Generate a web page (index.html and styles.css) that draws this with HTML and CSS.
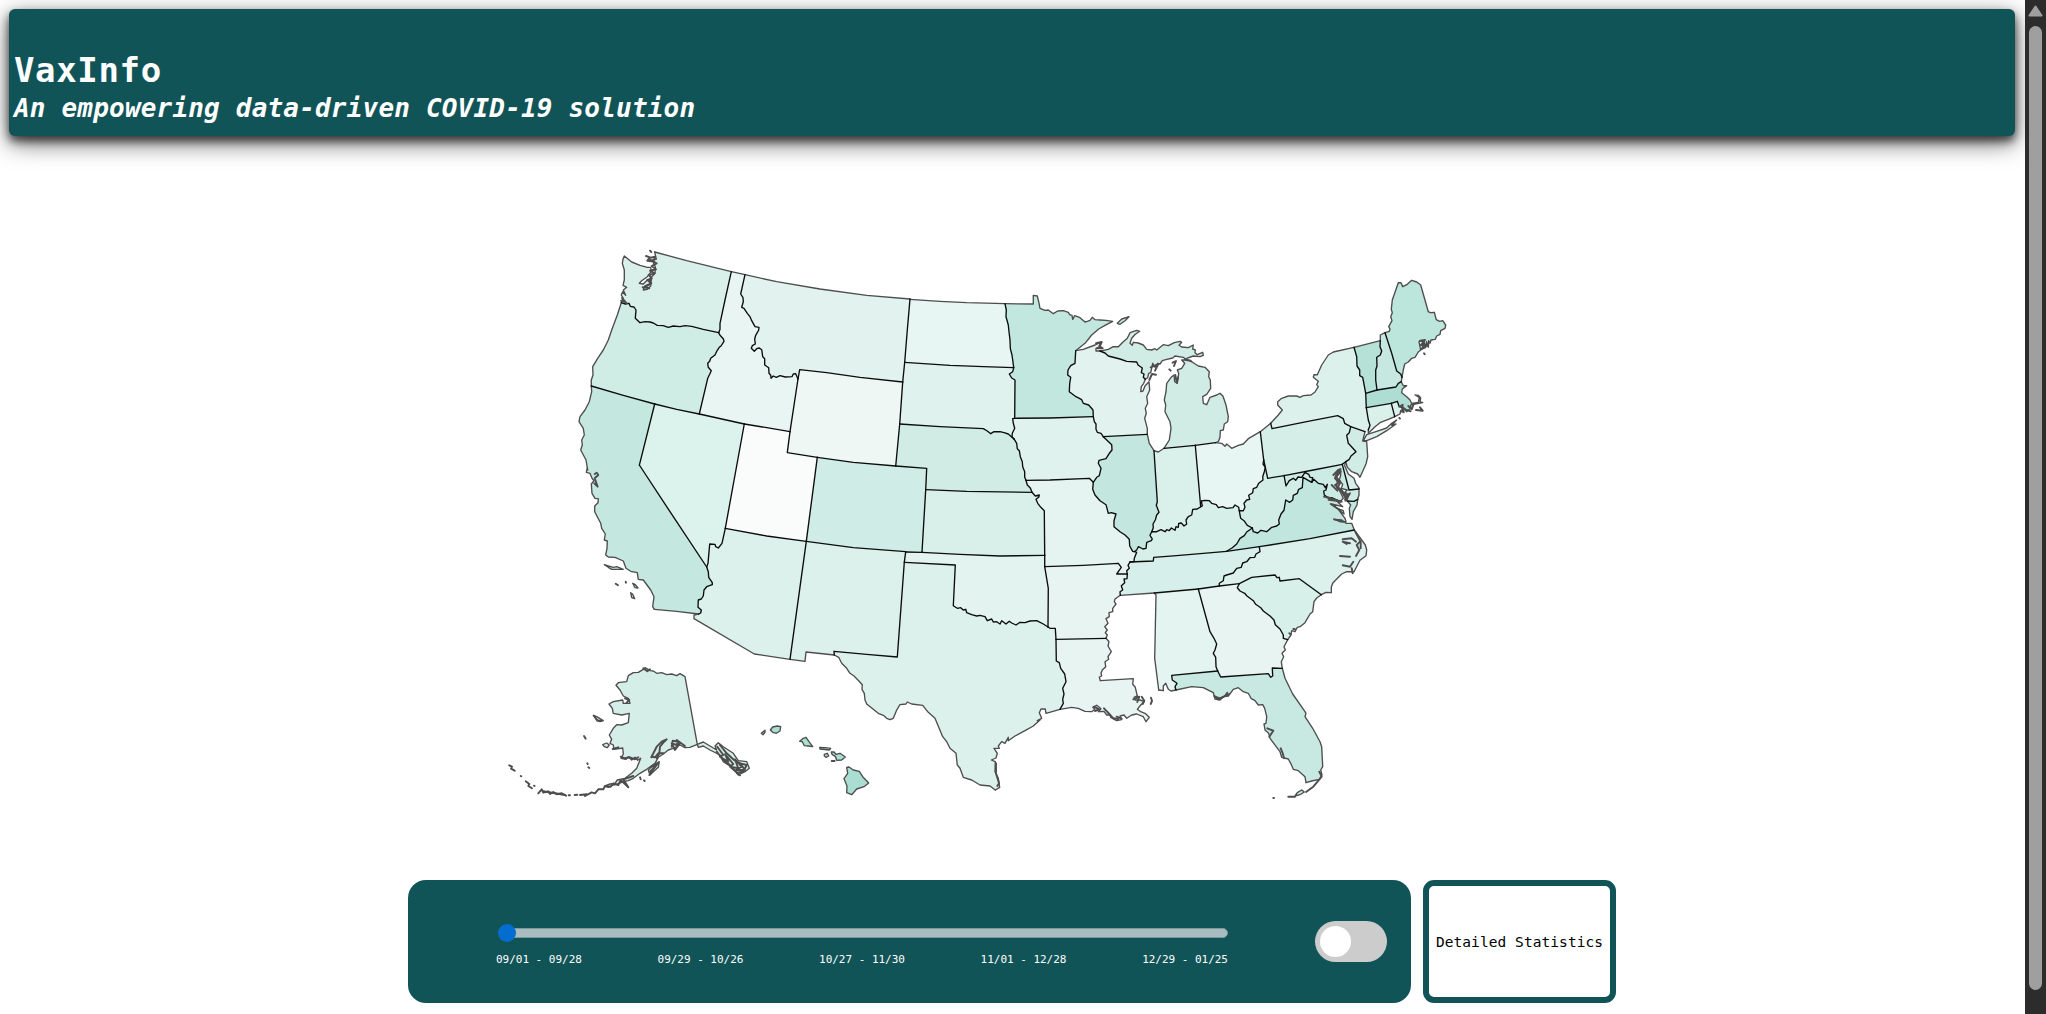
FILE: index.html
```html
<!DOCTYPE html>
<html lang="en">
<head>
<meta charset="utf-8">
<title>VaxInfo</title>
<link rel="stylesheet" href="styles.css">
</head>
<body>
<div class="page">
  <header class="banner">
    <h1 class="banner-title">VaxInfo</h1>
    <h2 class="banner-subtitle">An empowering data-driven COVID-19 solution</h2>
  </header>
  <main>
    <svg class="map" id="map" viewBox="475 230 1075 580" role="img" aria-label="Map of the United States"></svg>
    <section class="controls">
      <div class="panel">
        <div class="timeline">
          <div class="track"><span class="thumb"></span></div>
          <div class="dates">
            <span>09/01 - 09/28</span><span>09/29 - 10/26</span><span>10/27 - 11/30</span><span>11/01 - 12/28</span><span>12/29 - 01/25</span>
          </div>
        </div>
        <div class="toggle"><span class="knob"></span></div>
      </div>
      <button class="details">Detailed Statistics</button>
    </section>
  </main>
</div>
<div class="scrollbar">
  <svg class="scroll-arrow" viewBox="0 0 15 12"><path d="M7.500 1.500L13.500 10.500H1.500Z"/></svg>
  <div class="scroll-thumb"></div>
</div>
<script src="map.js"></script>
</body>
</html>
```
FILE: styles.css
```css
* { box-sizing: border-box; }
body {
  margin: 0;
  height: 1014px;
  overflow: hidden;
  display: flex;
  background: #fff;
  font-family: "DejaVu Sans Mono", monospace;
}
.page { flex: 1; padding: 9px 10px 0 9px; min-width: 0; overflow: hidden; }
.banner {
  height: 127px;
  padding: 39px 5px 0;
  border-radius: 6px;
  background: #115458;
  color: #fff;
  box-shadow: 0 5px 9px rgba(0, 0, 0, .6), 0 7px 23px rgba(0, 0, 0, .6);
}
.banner-title { margin: 0; font-size: 34px; line-height: 44px; letter-spacing: .65px; }
.banner-subtitle { margin: -2px 0 0; font-size: 26px; line-height: 36px; letter-spacing: .19px; font-style: italic; white-space: nowrap; }
.map { display: block; width: 1075px; height: 580px; margin: 94px auto 70px; }
.map path { stroke-linejoin: round; stroke-linecap: round; }
.border { fill: none; stroke: #0c0c0c; stroke-width: 1.35; }
.coast { fill: none; stroke: #4d4d4d; stroke-width: 1.35; }
.rough { fill: none; stroke: #4d4d4d; stroke-width: 1.9; }
.controls { display: flex; justify-content: center; gap: 12px; height: 123px; }
.panel {
  width: 1003px;
  display: flex;
  border-radius: 18px;
  background: #115458;
  padding: 41px 24px 0 87px;
}
.timeline { width: 734px; padding-top: 7px; }
.track {
  width: 729px;
  height: 10px;
  margin-left: 4px;
  border: 1px solid #7d989b;
  border-radius: 5px;
  background: #a9bdc1;
  display: flex;
  align-items: center;
}
.thumb { width: 18px; height: 18px; flex: none; margin-left: -2px; border-radius: 50%; background: #066dd0; }
.dates {
  display: flex;
  justify-content: space-between;
  width: 732px;
  margin: 14px 0 0 1px;
  color: #fff;
  font-size: 11px;
  line-height: 16px;
  letter-spacing: -.02px;
}
.toggle { width: 72px; height: 41px; margin-left: auto; padding: 5px; border-radius: 21px; background: #ccc; }
.knob { display: block; width: 31px; height: 31px; border-radius: 50%; background: #fff; }
.details {
  width: 193px;
  border: 6px solid #115458;
  border-radius: 11px;
  background: #fff;
  color: #000;
  font: 14.5px "DejaVu Sans Mono", monospace;
  letter-spacing: .07px;
  padding: 0;
  white-space: nowrap;
}
.scrollbar { width: 21px; background: #2c2c2c; display: flex; flex-direction: column; align-items: center; padding-top: 5px; }
.scroll-arrow { width: 15px; height: 12px; fill: #9f9f9f; stroke: #9f9f9f; stroke-width: 2; stroke-linejoin: round; }
.scroll-thumb { width: 13px; height: 964px; margin-top: 9px; border-radius: 7px; background: #9f9f9f; }
```
FILE: map.js
```js
// Each map sheet is digitised at three units per pixel from its own origin.
const sheets = { A: [560, 230], B: [560, 460], C: [900, 280], D: [900, 500], E: [1200, 270], F: [1110, 440], G: [1180, 560], H: [490, 650] };

// Borders between two states.
const borders = {
  wa_or: "A 184,218 196,222 207,220 211,229 222,231 228,240 226,265 240,278 255,275 270,276 280,279 292,286 310,287 325,292 340,288 360,290 375,287 395,289 430,298 476,308",
  wa_id: "A 514,125 495,210 480,280 480,298 476,308",
  or_id: "A 476,308 480,316 490,326 492,334 483,348 478,352 472,361 465,375 452,385 449,394 443,400 445,412 454,422 449,433 443,445 418,552",
  or_ca: "A 94,468 190,496 284,522", or_nv: "A 284,522 350,538 418,552",
  id_nv: "A 418,552 553,582", id_ut: "A 553,582 620,593 690,605",
  id_mt: "A 555,134 542,192 549,203 550,215 545,232 552,235 562,250 570,260 575,272 585,290 597,292 596,300 587,316 584,327 586,342 577,347 574,355 583,364 590,356 598,354 605,359 608,380 614,386 614,405 626,413 627,430 632,436 633,445 640,438 649,442 660,437 676,441 696,440 700,432 707,431 714,447",
  id_wy: "A 714,447 690,605", mt_wy: "A 714,447 719,419 800,428 900,442 1028,456",
  mt_nd: "A 1050,207 1042,300 1034,397", mt_sd: "A 1034,397 1028,456",
  wy_sd: "A 1028,456 1019,582", wy_ne: "A 1019,582 1007,708",
  wy_ut: "A 690,605 682,668 772,682", wy_co: "A 772,682 880,697 1007,708",
  ne_co: "A 1007,708|C 80,565 77,629", co_ks: "C 77,629|D 66,157",
  nd_sd: "C 14,247 150,256 250,260 341,263",
  sd_ne: "A 1019,582|C 120,440 250,446 262,453 272,461 282,455 300,455 312,458 325,462 335,471 343,478",
  nd_mn: "C 315,71 319,90 318,110 325,135 327,155 330,180 331,205 336,225 338,240 341,263",
  sd_mn: "C 341,263 338,275 328,282 335,294 345,300 344,415",
  mn_ia: "C 344,415 450,414 580,410",
  sd_ia: "C 344,415 338,416 340,430 344,445 337,460 336,470 343,478",
  ne_ia: "C 343,478 350,490 352,506 358,512 361,530 367,545 368,560 374,575 374,592 378,601",
  ne_mo: "C 378,601 382,615 391,624 396,637", ne_ks: "C 77,629 200,634 396,637",
  ks_mo: "C 396,637 406,648 418,645 416,652 408,658 413,670 421,680 433,692|D 434,166",
  ks_ok: "D 434,166 300,168 180,163 66,157", co_ok: "D 66,157 17,156",
  co_nm: "B 739,244 880,263 1037,275", ok_nm: "B 1037,275 1033,307",
  nm_tx: "B 1033,307 1012,591 920,583 822,574 823,585",
  ut_co: "A 772,682|B 739,244", ut_nv: "A 553,582|B 496,205",
  ut_az: "B 496,205 620,228 739,244",
  nv_az: "B 496,205 486,250 475,264 467,260 465,253 449,252 444,310 440,321",
  ca_nv: "A 284,522 238,706|B 240,18 340,170 440,321",
  ca_az: "B 440,321 445,335 446,352 457,368 457,374 440,380 432,390 430,408 424,417 415,420 414,442 424,450 422,459 416,462",
  az_nm: "B 739,244 690,598",
  ok_tx: "D 14,187 166,195 160,317 172,325 182,323 190,330 197,328 200,338 215,344 230,348 240,346 255,350 262,362 275,357 280,366 290,365 300,372 305,362 318,372 328,364 335,369 348,375 360,367 375,368 390,363 410,362 430,372 444,381",
  ok_ar: "D 434,200 445,265 444,381", ok_mo: "D 434,166 434,200",
  mo_ar: "D 434,200 550,196 655,190 664,202 657,212 650,222 682,222",
  ar_tx: "D 444,381 450,385 466,385 468,418", ar_la: "D 468,418 618,415",
  tx_la: "D 468,418 469,483 478,488 482,505 494,522 498,545 488,565 492,582 488,598 490,610 480,628",
  ar_tn: "D 682,222 681,236 672,237 674,248 664,257 668,270 660,275 661,286",
  mo_tn: "D 682,222 680,212 688,205 684,196 690,186",
  mo_ky: "D 690,186 702,185 703,175 710,157 705,155",
  mo_il: "C 580,607 578,628 585,645 600,662 618,674 625,700 634,698 648,702|D 642,62 642,80 660,95 675,105 688,118 689,138 698,154 705,155",
  ia_mo: "C 378,601 450,600 568,595 580,607",
  ia_il: "C 580,607 590,592 598,587 603,565 595,550 597,541 618,536 628,520 636,510 635,494 620,480 610,470",
  ia_wi: "C 580,410 583,425 588,432 588,448 592,457 603,460 610,470",
  mn_wi: "C 580,410 579,390 566,375 550,370 545,359 528,350 508,335 509,310 512,292 503,285 504,270 512,257 525,250 527,212",
  wi_il: "C 610,470 742,463",
  wi_mi: "C 600,213 615,219 625,228 660,237 680,244 710,246 714,255 727,264 724,278 732,282 730,292 736,298",
  in_mi: "C 792,505 886,496", mi_oh: "C 886,496 947,488",
  ny_pa: "E 212,460 216,476 320,455 413,437 430,446 434,460 452,470",
  ny_vt: "E 462,232 470,260 471,288 479,300 479,317 488,322 497,370",
  ny_ma: "E 497,370 499,413", ny_ct: "E 499,413 505,450 510,466 505,480",
  nh_vt: "E 541,212 540,230 545,243 541,255 530,262 531,288 527,300 527,330 531,360",
  vt_ma: "E 497,370 531,360", nh_ma: "E 531,360 588,351 595,340 604,335",
  nh_me: "E 555,188 575,250 590,303 602,312 606,322",
  ma_ri: "E 574,400 592,394 597,408 610,415", ma_ct: "E 499,413 574,400", ct_ri: "E 574,400 584,440",
  ny_nj: "E 452,470 495,485",
  pa_nj: "E 452,470 448,488 440,496 445,520 456,532 468,545 453,558 447,569 437,575",
  pa_de: "E 437,575 427,583", pa_md: "E 427,583 340,600 253,617",
  pa_wv: "E 253,617 203,625 191,570", pa_oh: "E 191,570 181,485",
  oh_wv: "F 461,60 459,72 466,82 463,95 458,110 459,120 446,130 440,142 430,146 428,158 416,166 419,178 410,180 402,190 405,202 400,212 388,212",
  oh_ky: "F 388,212 386,202 375,195 369,203 350,205 338,200 325,203 319,194 305,190 298,182 285,181 274,183 277,198 272,200",
  in_oh: "C 886,496|F 272,200",
  in_ky: "F 272,200 262,207 248,208 245,225 235,230 228,240 230,252 222,258 214,249 206,250 205,262 198,260 195,271 184,264 178,272 170,269 165,275 153,269 140,275 125,275",
  il_in: "C 762,512|F 142,185 139,196 147,217 140,225 136,240 129,252 130,263 125,275",
  il_ky: "F 125,275 120,286 127,297 124,302 110,307 108,325 99,327 85,320 80,330 72,335",
  ky_tn: "F 60,366 130,363 131,352 200,347 350,334", va_tn: "F 350,334 448,320",
  ky_va: "F 350,334 367,323 380,312 390,295 403,287 410,276 427,264",
  ky_wv: "F 427,264 412,256 402,242 392,235 390,225 388,212",
  va_wv: "F 427,264 430,275 443,279 453,271 470,275 485,262 500,258 508,252 506,240 513,222 522,211 527,180 539,187 548,180 550,166 562,160 566,148 577,143 579,112 605,127",
  wv_md: "F 522,106 528,138 538,122 550,115 557,121 564,111 575,112 585,97 596,103 600,112 608,113 605,127",
  va_md: "F 605,127 611,118 625,130 640,133 646,143 652,133 648,150 641,153 643,165 656,174 665,173 690,185",
  va_nc: "F 733,270 600,296 448,320",
  tn_nc: "F 448,320 450,335 438,342 434,352 420,353 410,365 398,369 394,382 380,385 370,399 350,405 342,408 340,422 328,430 328,438",
  tn_ga: "F 328,438 265,447", tn_al: "F 265,447 133,459",
  al_fl: "F 198,750 195,740 201,730 187,720 185,706 323,693",
  al_ga: "F 265,447 300,575 312,595 320,612 315,630 310,640 317,652 318,680 323,693",
  ga_fl: "F 323,693 332,711 475,701 482,712 488,708 487,684 517,685",
  ga_nc: "F 328,438 388,431",
  ga_sc: "F 388,431 382,443 390,453 404,460 410,467 430,482 437,493 452,503 460,513 480,528 492,540 496,554 510,567 520,585 520,595 533,599",
  sc_nc: "F 388,431 425,412 495,405 501,413 508,412 510,423 568,416 634,464",
  md_de: "F 697,73 717,150 747,147", md_va2: "F 743,178 732,184 712,183"
};

// Shoreline and outer national borders.
const coasts = {
  wa_c: "A 184,218 190,205 184,195 188,185 197,196 190,180 200,172 189,166 193,150 193,120 187,100 189,88 193,78 215,96 240,106 262,112 272,112 274,125 262,140 245,152 238,160 250,162 262,150 272,150 268,165 252,172 250,180 262,178 272,168 275,140 285,130 286,110 276,90 289,88 284,66",
  wa_n: "A 284,66 380,92 514,125", id_n: "A 514,125 555,134",
  mt_n: "A 555,134 650,155 780,177 920,196 1050,207", nd_n: "C 30,58 120,64 200,68 315,71",
  mn_n: "C 315,71 400,72 400,46 412,48 416,65 420,85 435,91 445,90 460,101 473,93 490,92 505,97 509,104 516,106 518,118 524,107 540,113 555,126 562,124 570,121 577,112 585,119 600,120 618,121 638,124 615,136 596,147 575,165 555,190 527,212",
  or_c: "A 184,218 172,255 155,300 145,330 130,360 115,382 98,410 99,435 94,450 94,468",
  ca_c: "A 94,468 95,485 88,515 75,540 60,560 57,575 70,595 73,615 65,630 67,645 62,660 78,690 83,720|B 82,22 79,37 90,40 96,55 102,62 94,72 96,100 105,115 115,116 114,128 104,138 104,155 112,170 122,190 125,205 136,222 133,240 142,243 141,265 137,285 145,291 165,292 190,303 198,325 212,334 232,338 235,358 250,360 272,390 282,410 278,440 283,448",
  ca_s: "B 283,448 350,454 416,462", az_s: "B 416,462 402,465 402,476 583,582 690,598",
  nm_s: "B 690,598 735,604 738,576 823,585",
  tx_s: "B 823,585 836,592 845,610 860,625 870,640 882,648 896,662 907,674 906,688 913,700 915,720|H 1130,162 1150,178 1165,190 1180,196 1190,205 1200,209|D -20,655 -10,630 0,614 18,612 22,606 35,612 68,616 85,637 105,655 128,710 140,725 150,745 168,760 172,795 180,805 190,832 215,840 240,855 270,858 286,870",
  tx_c: "D 286,870 299,862 295,835 285,815 286,785 274,780 288,774 292,760 282,745 298,745 295,738 305,725 315,730 325,712 325,722 345,708 375,692 400,678 420,660 412,662 425,655 418,638 423,627 436,627 438,640 480,628",
  la_c: "D 480,628 515,622 535,625 555,634 575,635 585,628 578,622 590,616 603,626 595,635 612,634 620,645 630,645 632,652 650,662 665,659 660,648 672,645 680,655 695,645 710,642 730,650 738,665 748,652 735,640 722,635 712,628 722,615 733,605 720,600 705,600 702,592 712,588",
  la_ms: "D 618,415 627,425 624,438 634,455 624,470 626,478 615,485 617,500 607,510 603,520 605,528 598,531 601,542 700,536 698,553 706,562 712,588",
  ar_ms: "D 661,286 645,297 643,305 648,312 638,325 638,335 627,338 628,350 618,356 624,370 614,380 622,390 616,398 622,405 618,415",
  wi_n: "C 527,212 550,208 585,195 605,186 600,200 588,205 588,213 600,213",
  wi_l: "C 736,298 731,310 724,320 722,335 729,333 735,318 747,305 749,330 740,350 743,370 736,385 739,400 734,415 742,445 742,463",
  il_l: "C 742,463 748,490 762,512", in_l: "C 762,512 775,516 792,505",
  mi_w: "C 792,505 808,480 813,445 810,425 795,395 797,375 793,360 798,335 800,310 815,290 822,285 824,305 832,310 836,280 832,270 845,265 854,250 845,240 860,240 875,245",
  mi_e: "C 875,245 895,258 915,262 928,275 926,290 931,300 932,325 920,343 908,350 910,370 920,374 930,352 950,345 960,340 969,349 978,375 985,410 983,425 973,432 970,450 961,452 960,472 955,485 947,488",
  up: "C 600,213 625,208 640,200 655,200 670,185 682,175 690,158 710,151 719,154 706,163 695,175 690,190 697,196 700,187 715,189 730,195 740,208 755,210 765,206 770,210 790,194 805,197 823,188 840,184 845,187 837,196 845,201 865,203 880,195 878,207 886,210 885,218 892,224 908,217 910,226 900,230 880,228 860,235 862,242 850,232 825,228 818,234 800,238 787,242 780,252 773,250 765,262 758,250 752,278 746,280 743,293 736,298",
  oh_l: "E 47,518 65,520 75,529 80,522 95,535 115,526 130,522 145,506 181,485", pa_l: "E 181,485 212,460",
  ny_c: "E 212,460 235,435 247,420 233,405 233,395 245,385 265,378 290,378 300,382 310,377 333,375 345,366 355,350 350,344 355,334 340,322 342,314 352,314 365,285 385,255 400,246 462,232",
  vt_n: "E 462,232 541,212", nh_n: "E 541,212 541,195 555,188", nh_c: "E 606,322 604,335",
  me_c: "E 555,188 568,184 570,177 566,170 576,152 572,140 577,128 574,118 577,90 595,38 603,38 608,50 622,43 635,31 650,36 662,45 685,125 691,128 703,127 709,149 719,154 728,152 737,165 735,175 722,182 720,193 710,198 706,208 693,210 690,220 686,212 685,232 680,215 675,234 672,212 657,215 662,240 655,246 645,262 635,265 625,276 614,282 610,300 606,322",
  ma_c: "E 604,335 610,347 620,347 607,357 605,368 622,382 630,390 635,400 655,397 658,382 645,375 655,376 662,384 660,395 668,398 645,402 632,405 632,415 620,425 610,415",
  ri_c: "E 610,415 612,428 602,422 600,432 584,440", ct_c: "E 584,440 565,448 540,458 525,470 505,490 505,480",
  nj_c: "E 495,485 488,513 500,515 503,560 498,582 480,622 473,612 455,605 442,592 437,575",
  de_c: "E 437,575 434,587 445,612 462,625 467,640 478,655",
  md_c: "F 747,147 747,165 743,178", dv_c: "F 743,178 741,195 730,215 726,238 720,230 718,205 722,195 712,183",
  md_bay: "F 712,183 704,178 716,165 705,156 712,150 694,145 698,133 688,120 692,105 692,86 683,90 680,98 675,112 682,125 680,142 688,150 700,175 690,185",
  va_c: "F 690,185 668,176 655,180 680,183 698,200 665,192 680,205 700,212 702,222 685,208 705,235 708,245 690,245 675,238 695,240 708,250 725,250 733,270",
  nc_c: "F 733,270 748,290 766,315 770,330 768,347 750,361 732,395 710,395 695,402 675,422 668,430 664,442 664,458 648,457 634,464",
  sc_c: "F 634,464 620,474 612,485 608,515 600,522 585,548 570,560 562,562 555,575 545,572 543,585 533,599",
  ga_c: "F 533,599 522,620 526,630 516,640 521,650 514,665 517,685",
  al_ms: "F 133,459 138,465 134,655 146,750", tn_ms: "F 31,466 133,459",
  al_c: "F 146,750 160,752 160,738 167,730 175,748 183,753 198,750",
  fl_c: "F 517,685 525,715 548,762 585,815|G 378,460 375,470 398,505 420,545 425,560 428,620 422,630 426,645 418,658 395,663 378,668 375,650 355,632 340,628 332,610 325,597 305,592 300,575 270,535 266,520 255,510 252,492 258,490 260,470 254,445 248,434 235,435 225,422 213,415 205,400 190,395 175,383 160,388 145,408 130,410 120,420 105,417 100,398 70,383 35,380|F 198,750"
};

const arcs = { ...borders, ...coasts };

// Fill colour, then the ring of arcs (joined end to end, direction resolved below).
const states = [
  ["#d9f0ea", "wa_c wa_n wa_id wa_or"], ["#cfece5", "wa_or or_id or_nv or_ca or_c"],
  ["#c4e8df", "or_ca ca_nv ca_az ca_s ca_c"], ["#dcf2ec", "or_nv id_nv ut_nv nv_az ca_nv"],
  ["#e8f5f3", "id_n id_mt id_wy id_ut id_nv or_id wa_id"], ["#e2f3ef", "mt_n mt_nd mt_sd mt_wy id_mt"],
  ["#eef7f4", "mt_wy wy_sd wy_ne wy_co wy_ut id_wy"], ["#fafcfc", "id_ut wy_ut ut_co ut_az ut_nv"],
  ["#d0ece6", "wy_co ne_co co_ks co_ok co_nm ut_co"], ["#dcf1ec", "ut_az az_nm az_s ca_az nv_az"],
  ["#dcf1ec", "co_nm ok_nm nm_tx nm_s az_nm"], ["#e7f5f3", "nd_n nd_mn nd_sd mt_nd"],
  ["#dff2ee", "nd_sd sd_mn sd_ia sd_ne wy_sd mt_sd"], ["#d0ece4", "sd_ne ne_ia ne_mo ne_ks ne_co wy_ne"],
  ["#d9f0ea", "ne_ks ks_mo ks_ok co_ks"], ["#e2f3f0", "co_ok ks_ok ok_mo ok_ar ok_tx ok_nm"],
  ["#dcf1ec", "ok_tx ar_tx tx_la tx_c tx_s nm_tx"], ["#c1e7de", "mn_n mn_wi mn_ia sd_mn nd_mn"],
  ["#dff2ee", "mn_ia ia_wi ia_il ia_mo ne_ia sd_ia"], ["#e5f4f1", "ia_mo mo_il mo_ky mo_tn mo_ar ok_mo ks_mo ne_mo"],
  ["#e7f4f2", "mo_ar ar_tn ar_ms ar_la ar_tx ok_ar"], ["#e7f4f2", "ar_la la_ms la_c tx_la"],
  ["#e1f2ef", "wi_n wi_mi wi_l wi_il ia_wi mn_wi"], ["#c3e7df", "wi_il il_l il_in il_ky mo_il ia_il"],
  ["#daf0eb", "in_l in_mi in_oh in_ky il_in"], ["#d0ece4", "mi_w mi_e mi_oh in_mi"], ["#d0ece4", "wi_mi up"],
  ["#e7f5f3", "mi_oh oh_l pa_oh oh_wv oh_ky in_oh"], ["#d7efe9", "in_ky oh_ky ky_wv ky_va ky_tn mo_ky il_ky"],
  ["#d7efea", "ky_tn va_tn tn_nc tn_ga tn_al tn_ms ar_tn mo_tn"], ["#e4f4f0", "tn_al al_ga al_fl al_c al_ms"],
  ["#e8f4f2", "tn_ga ga_nc ga_sc ga_c ga_fl al_ga"], ["#c7e9e1", "al_fl ga_fl fl_c"],
  ["#d8f0ea", "sc_nc sc_c ga_sc"], ["#dcf1ec", "va_nc nc_c sc_nc ga_nc tn_nc"],
  ["#c0e6dd", "va_wv va_md va_c va_nc va_tn ky_va"], ["#d2ece6", "pa_wv wv_md va_wv ky_wv oh_wv"],
  ["#d6eee8", "pa_l ny_pa pa_nj pa_de pa_md pa_wv pa_oh"], ["#dcf1ec", "ny_c ny_vt ny_ma ny_ct ny_nj ny_pa"],
  ["#d0ece5", "ny_nj nj_c pa_nj"], ["#d6efe8", "pa_de de_c md_de"],
  ["#ccebe4", "pa_md md_de md_c md_va2 md_bay va_md wv_md"], ["#c0e6dd", "md_va2 dv_c"],
  ["#daf0ea", "ma_ct ct_ri ct_c ny_ct"], ["#daf0ea", "ma_ri ri_c ct_ri"],
  ["#aeded3", "vt_ma nh_ma ma_c ma_ri ma_ct ny_ma"], ["#b5e1d7", "vt_n nh_vt vt_ma ny_vt"],
  ["#c7e8e0", "nh_n nh_me nh_c nh_ma nh_vt"], ["#bce5db", "me_c nh_me"]
];

const islands = [
  ["#d6eee8", "H 585,80 622,283 600,292 585,293 570,285 550,295 535,300 520,312 505,322 495,340 470,358 450,370 430,385 415,392 400,395 385,402 370,405 355,412 345,408 360,402 375,400 382,390 405,385 425,370 440,355 452,325 443,331 435,322 425,330 415,320 408,328 393,325 400,312 398,294 372,298 370,285 360,280 365,268 358,255 370,235 380,224 395,225 415,218 418,190 395,195 370,190 367,175 357,162 370,155 398,150 400,160 420,160 415,145 400,138 390,120 378,106 385,98 410,95 415,77 430,68 445,67 460,58 465,53 480,62 490,63 500,70 515,68 530,74 545,72 560,77 570,71"],
  ["#d6eee8", "H 622,283 640,276 660,288 680,300 675,288 685,278 700,290 730,310 745,332 770,335 778,355 765,365 745,375 730,355 700,335 690,315 660,300 640,288 625,292"],
  ["#d6eee8", "H 310,196 320,200 340,212 330,215 318,206"],
  ["#d6eee8", "H 338,284 350,279 358,285 352,293 343,290"],
  ["#d6eee8", "H 475,360 490,345 508,335 505,352 490,365 480,375"],
  ["#abded2", "H 841,240 848,231 862,228 872,230 870,243 859,250 848,247"],
  ["#abded2", "H 814,250 825,241 825,247 819,254"],
  ["#abded2", "H 929,274 938,266 948,262 957,275 968,290 955,288 943,287 937,275"],
  ["#abded2", "H 989,292 1005,293 1022,295 1018,300 990,297"],
  ["#abded2", "H 1003,313 1012,310 1016,318 1008,322 1003,318"],
  ["#abded2", "H 1024,306 1032,306 1038,313 1050,310 1066,321 1055,330 1040,331 1036,319 1026,313"],
  ["#abded2", "H 1070,352 1077,351 1090,360 1108,364 1118,380 1136,399 1122,410 1100,417 1085,434 1070,428 1071,408 1062,386 1073,370"],
  ["#dcf1ec", "E 490,512 500,494 530,484 560,474 575,460 590,450 575,466 588,462 560,482 530,500 500,512"],
  ["#c1e7de", "C 652,130 665,117 687,110 675,122 660,133"],
  ["#c7e9e1", "G 345,708 352,698 365,690 373,696 360,704"],
  ["#c4e8df", "B 133,314 145,318 160,322 170,320 190,328 175,328 155,328 145,322"],
  ["#c4e8df", "B 218,370 226,374 234,384 225,383"],
  ["#c4e8df", "B 212,398 218,403 224,416 215,413"]
];

// Dense inlets, sounds and small island chains.
const rough = [
  "A 270,62 274,66", "A 258,78 270,82 262,92 275,94 268,84 286,80 280,95 290,100 275,108 288,118 270,122 284,130 266,135 275,145 262,150 274,160 255,168 268,175 248,172",
  "A 183,212 196,216 186,204 200,220", "B 104,42 110,38 115,45 104,55 113,80 103,70",
  "B 167,371 174,376", "B 197,365 198,368",
  "C 588,190 605,186 598,198 608,205 592,205", "C 818,248 828,243 822,258", "C 808,268 812,272", "C 826,285 830,308 834,292", "C 748,300 756,282 768,284", "C 752,262 775,252 765,272", "C 855,238 872,242",
  "D 725,590 733,602 728,612", "D 753,593 756,603 752,612", "D 700,598 718,590 712,606", "D 582,620 598,628 585,633", "D 650,650 665,656", "D 288,790 288,820 297,850 292,858",
  "D 612,625 628,642 640,655 655,657",
  "E 598,410 608,404 606,425 612,415 618,420", "E 660,212 675,210 662,225 685,225 665,238 672,220", "E 620,420 632,424", "E 648,420 668,422 660,412", "E 625,408 635,418 640,405", "E 598,444 600,446", "E 672,250 674,253",
  "E 400,615 415,600 422,605 405,625 420,640 412,655 425,665 440,690 445,675 430,668", "E 395,645 412,662", "E 372,680 400,688 425,695",
  "F 688,90 678,110 690,125 675,135 695,150 708,170 720,160 706,182 712,175", "F 655,172 690,185", "F 662,192 690,210", "F 672,238 700,245",
  "F 698,298 725,295 738,305", "F 720,310 698,305 710,312", "F 690,348 720,350", "F 738,348 748,330 740,315 750,305", "F 698,376 720,380 730,365", "F 736,275 752,305 752,325", "F 725,385 728,400",
  "F 313,768 325,778 345,768 352,758",
  "G 262,505 280,512 268,530", "G 302,565 308,580 312,595", "G 105,410 120,415 148,402", "G 418,635 425,650 400,680 378,696", "G 325,710 345,710", "G 280,714 282,714", "G 328,220 332,223", "G 340,207 345,208",
  "H 58,346 66,350 63,356 74,362", "H 92,378 94,379", "H 107,394 118,402 115,408 126,415", "H 132,407 134,408", "H 145,430 155,418 160,428 175,424 180,432 190,426 200,433 215,430 228,437", "H 160,424 195,430 225,435", "H 236,436 240,436", "H 254,435 262,434", "H 270,435 290,433 285,438 305,427 315,430 325,418 340,418 345,408 362,410 370,400 385,405 392,390 405,402 415,412 400,388 430,378",
  "H 282,258 287,266", "H 292,340 293,342", "H 295,352 298,354", "H 450,382 452,388", "H 462,391 464,393", "H 478,375 500,345 480,365 505,340 485,350", "H 484,322 500,290 515,275 530,268 520,278 510,290 508,310 500,325",
  "H 485,320 495,322 505,310 520,310", "H 545,290 548,272 565,275 560,285 545,280 555,300 570,280 560,270 585,288",
  "H 682,290 700,315 690,320 715,335 705,312 730,342 720,350 745,355 735,328 755,350 738,360 765,360 750,340 770,345 760,365 740,368 750,376 722,352",
  "H 690,285 710,310 732,330 750,340", "H 680,305 700,330 720,345", "H 392,320 405,325 420,322 435,328 445,322", "H 405,145 418,150 410,158", "H 368,297 385,292",
  "H 460,55 472,64 480,58", "H 1025,333 1034,333", "H 312,197 322,212 335,212"
];

const points = text => text.split("|").flatMap(part => {
  const [sheet, ...pairs] = part.trim().split(" ");
  const [ox, oy] = sheets[sheet];
  return pairs.map(p => { const [x, y] = p.split(",").map(Number); return [ox + x / 3, oy + y / 3]; });
});
const line = pts => "M" + pts.map(p => p[0].toFixed(1) + "," + p[1].toFixed(1)).join("L");
const svg = document.getElementById("map");
const draw = (d, name, fill) => {
  const path = document.createElementNS("http://www.w3.org/2000/svg", "path");
  path.setAttribute("d", d);
  if (name) path.setAttribute("class", name);
  if (fill) path.style.fill = fill;
  svg.appendChild(path);
};
const gap = (a, b) => Math.hypot(a[0] - b[0], a[1] - b[1]);
const ring = names => {
  const list = names.split(" ").map(n => points(arcs[n]));
  const [first, second] = list;
  const near = p => Math.min(gap(p, second[0]), gap(p, second[second.length - 1]));
  let out = list.length > 2 && near(first[0]) < near(first[first.length - 1]) ? first.reverse() : first;
  for (const arc of list.slice(1)) {
    const end = out[out.length - 1];
    out = out.concat(gap(end, arc[0]) <= gap(end, arc[arc.length - 1]) ? arc : arc.reverse());
  }
  return line(out) + "Z";
};
for (const [fill, names] of states) draw(ring(names), "", fill);
for (const [fill, text] of islands) draw(line(points(text)) + "Z", "coast", fill);
for (const n in coasts) draw(line(points(coasts[n])), "coast");
for (const n in borders) draw(line(points(borders[n])), "border");
for (const text of rough) draw(line(points(text)), "rough");
```
